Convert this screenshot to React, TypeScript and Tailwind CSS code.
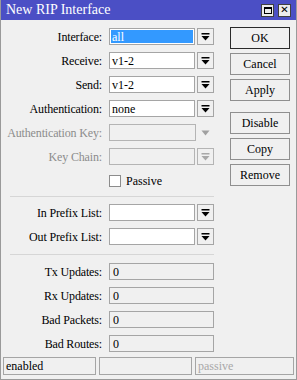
import React from "react";

function DropIcon({ disabled }: { disabled?: boolean }) {
  const c = disabled ? "#a8a8a8" : "#000";
  return (
    <svg width="9" height="8" viewBox="0 0 9 8">
      <rect x="0.5" y="0" width="8" height="1.5" fill={c} />
      <polygon points="0.5,3 8.5,3 4.5,7.5" fill={c} />
    </svg>
  );
}

function Label({ text, disabled }: { text: string; disabled?: boolean }) {
  return (
    <div className={`w-[101px] shrink-0 text-right text-[12px] leading-none whitespace-nowrap tracking-[-0.15px] ${disabled ? "text-[#8c8c8c]" : "text-black"}`}>
      {text}
    </div>
  );
}

function ComboRow({ label, value, selected }: { label: string; value: string; selected?: boolean }) {
  return (
    <div className="flex items-center h-[17px]">
      <Label text={label} />
      <div className="ml-[7px] w-[86px] h-[17px] border border-[#a5a5a5] bg-white p-[1px]">
        <div className={`h-full flex items-center pl-[1px] text-[12px] leading-none ${selected ? "bg-[#3399ff] text-white" : "text-black"}`}>
          {value}
        </div>
      </div>
      <div className="ml-[2px] w-[17px] h-[17px] border border-[#a5a5a5] bg-[#f0f0f0] flex items-center justify-center">
        <DropIcon />
      </div>
    </div>
  );
}

function ReadRow({ label, value }: { label: string; value: string }) {
  return (
    <div className="flex items-center h-[17px]">
      <Label text={label} />
      <div className="ml-[7px] w-[105px] h-[17px] border border-[#a5a5a5] bg-[#f0f0f0] flex items-center pl-[3px] text-[12px] leading-none text-black">
        {value}
      </div>
    </div>
  );
}

function Btn({ text, def }: { text: string; def?: boolean }) {
  return (
    <div className={`w-[60px] h-[22px] flex items-center justify-center text-[12px] leading-none bg-[#f0f0f0] border ${def ? "border-[#2a2a2a]" : "border-[#8f8f8f]"}`}>
      {text}
    </div>
  );
}

export default function App() {
  return (
    <div className="w-[297px] h-[380px] bg-[#f0f0f0] flex flex-col overflow-hidden border-x border-b border-[#9a9a9a] font-['Liberation_Serif','DejaVu_Serif',serif]">
      {/* title bar */}
      <div className="h-[20px] shrink-0 bg-[#4b4fc5] flex items-center pl-[5px] pr-[5px]">
        <span className="text-white text-[14px] leading-none flex-1">New RIP Interface</span>
        <div className="flex gap-[4px]">
          <div className="w-[13px] h-[13px] bg-[#ececec] border border-[#404040] flex items-center justify-center">
            <div className="w-[8px] h-[7px] border border-black border-t-2" />
          </div>
          <div className="w-[13px] h-[13px] bg-[#ececec] border border-[#404040] flex items-center justify-center text-black text-[10px] font-bold leading-none font-['DejaVu_Sans',sans-serif]">
            ✕
          </div>
        </div>
      </div>

      <div className="flex flex-1">
        {/* form */}
        <div className="w-[213px] flex flex-col pt-[8px]">
          <div className="flex flex-col gap-[7px]">
            <ComboRow label="Interface:" value="all" selected />
            <ComboRow label="Receive:" value="v1-2" />
            <ComboRow label="Send:" value="v1-2" />
            <ComboRow label="Authentication:" value="none" />
            <div className="flex items-center h-[17px]">
              <Label text="Authentication Key:" disabled />
              <div className="ml-[7px] w-[87px] h-[17px] border border-[#b4b4b4] bg-[#f0f0f0]" />
              <div className="ml-[1px] w-[17px] flex items-center justify-center">
                <svg width="9" height="6" viewBox="0 0 9 6">
                  <polygon points="0.5,0.5 8.5,0.5 4.5,5.5" fill="#a0a0a0" />
                </svg>
              </div>
            </div>
            <div className="flex items-center h-[17px]">
              <Label text="Key Chain:" disabled />
              <div className="ml-[7px] w-[86px] h-[17px] border border-[#b4b4b4] bg-[#f0f0f0]" />
              <div className="ml-[2px] w-[17px] h-[17px] border border-[#b4b4b4] bg-[#f0f0f0] flex items-center justify-center">
                <DropIcon disabled />
              </div>
            </div>
            <div className="flex items-center h-[17px]">
              <div className="w-[108px] shrink-0" />
              <div className="w-[12px] h-[12px] border border-[#8c8c8c] bg-white" />
              <span className="ml-[5px] text-[12px] leading-none text-black">Passive</span>
            </div>
          </div>

          <div className="ml-[9px] mt-[7px] h-px bg-[#d6d6d6]" />

          <div className="flex flex-col gap-[7px] mt-[7px]">
            <ComboRow label="In Prefix List:" value="" />
            <ComboRow label="Out Prefix List:" value="" />
          </div>

          <div className="ml-[9px] mt-[9px] h-px bg-[#d6d6d6]" />

          <div className="flex flex-col gap-[7px] mt-[8px]">
            <ReadRow label="Tx Updates:" value="0" />
            <ReadRow label="Rx Updates:" value="0" />
            <ReadRow label="Bad Packets:" value="0" />
            <ReadRow label="Bad Routes:" value="0" />
          </div>
        </div>

        {/* buttons */}
        <div className="ml-[16px] pt-[7px] flex flex-col">
          <div className="flex flex-col gap-[4px]">
            <Btn text="OK" def />
            <Btn text="Cancel" />
            <Btn text="Apply" />
          </div>
          <div className="flex flex-col gap-[4px] mt-[11px]">
            <Btn text="Disable" />
            <Btn text="Copy" />
            <Btn text="Remove" />
          </div>
        </div>
      </div>

      {/* status bar */}
      <div className="flex gap-[3px] px-[2px] pb-[4px] h-[22px] shrink-0">
        <div className="w-[93px] h-[18px] border border-[#a5a5a5] flex items-center pl-[2px] text-[12px] leading-none text-black">enabled</div>
        <div className="w-[93px] h-[18px] border border-[#a5a5a5]" />
        <div className="flex-1 h-[18px] border border-[#a5a5a5] flex items-center pl-[2px] text-[12px] leading-none text-[#a8a8a8]">passive</div>
      </div>
    </div>
  );
}
